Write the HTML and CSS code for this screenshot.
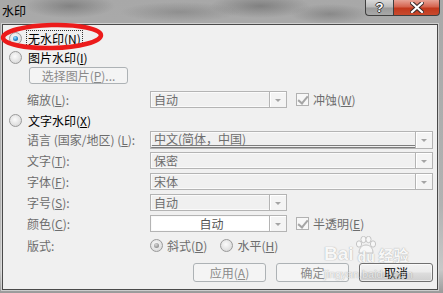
FILE: index.html
```html
<!DOCTYPE html>
<html>
<head>
<meta charset="utf-8">
<link rel="stylesheet" href="styles.css">
</head>
<body>
<div class="window">
  <div class="titlebar">
    <span class="title">水印</span>
    <div class="caption-btns">
      <div class="cbtn help"><span>?</span></div>
      <div class="cbtn close">
        <svg width="14" height="11" viewBox="0 0 14 11"><path d="M2 1 L12 10 M12 1 L2 10" stroke="#3a2a2a" stroke-width="4.2" stroke-linecap="square"/><path d="M2 1 L12 10 M12 1 L2 10" stroke="#fff" stroke-width="2.2" stroke-linecap="square"/></svg>
      </div>
    </div>
  </div>
  <div class="client">
    <div class="row opt r1"><span class="radio on"></span><span class="optlabel focus">无水印(<u>N</u>)</span></div>
    <div class="row opt r2"><span class="radio"></span><span class="optlabel">图片水印(<u>I</u>)</span></div>
    <div class="row r3"><div class="btn dis pick">选择图片(<u>P</u>)...</div></div>
    <div class="row field r4">
      <span class="lbl">缩放(<u>L</u>):</span>
      <div class="combo short"><span class="ctext">自动</span><span class="arrow"></span></div>
      <span class="check"></span><span class="chklbl">冲蚀(<u>W</u>)</span>
    </div>
    <div class="row opt r5"><span class="radio"></span><span class="optlabel">文字水印(<u>X</u>)</span></div>
    <div class="row field r6">
      <span class="lbl">语言 (国家/地区) (<u>L</u>):</span>
      <div class="combo long"><span class="ctext lang">中文(简体，中国)</span><span class="arrow"></span></div>
    </div>
    <div class="row field r7">
      <span class="lbl">文字(<u>T</u>):</span>
      <div class="combo long"><span class="ctext">保密</span><span class="arrow"></span></div>
    </div>
    <div class="row field r8">
      <span class="lbl">字体(<u>F</u>):</span>
      <div class="combo long"><span class="ctext">宋体</span><span class="arrow"></span></div>
    </div>
    <div class="row field r9">
      <span class="lbl">字号(<u>S</u>):</span>
      <div class="combo short"><span class="ctext">自动</span><span class="arrow"></span></div>
    </div>
    <div class="row field r10">
      <span class="lbl">颜色(<u>C</u>):</span>
      <div class="combo short"><span class="ctext white center">自动</span><span class="arrow"></span></div>
      <span class="check"></span><span class="chklbl">半透明(<u>E</u>)</span>
    </div>
    <div class="row field r11">
      <span class="lbl">版式:</span>
      <span class="radio dot"></span><span class="rlbl">斜式(<u>D</u>)</span>
      <span class="radio second"></span><span class="rlbl">水平(<u>H</u>)</span>
    </div>
    <div class="row r12">
      <div class="btn dis">应用(<u>A</u>)</div>
      <div class="btn dis">确定</div>
      <div class="btn active">取消</div>
    </div>
  </div>
  <svg class="mark" width="110" height="32" viewBox="0 0 110 32"><ellipse cx="52" cy="14.5" rx="49" ry="11.5" fill="none" stroke="#ec1b1b" stroke-width="4.5" transform="rotate(-1.5 52 14.5)"/></svg>
  <div class="wm">
    <div class="wm-line">
      <span class="wm-big">Bai</span>
      <span class="wm-du">
        <svg class="paw" width="22" height="20" viewBox="0 0 22 20"><g fill="#fff" stroke="#9a9a9a" stroke-width="1"><ellipse cx="4" cy="8" rx="2.6" ry="3.2"/><ellipse cx="8.5" cy="3.5" rx="2.6" ry="3.2"/><ellipse cx="13.5" cy="3.5" rx="2.6" ry="3.2"/><ellipse cx="18" cy="8" rx="2.6" ry="3.2"/><path d="M4 17 C4 11 8 9 11 9 C14 9 18 11 18 17 Z"/></g></svg>
        <span class="du">du</span>
      </span>
      <span class="wm-cn">经验</span>
    </div>
    <div class="wm-url">jingyan.baidu.com</div>
  </div>
</div>
</body>
</html>
```

FILE: styles.css
```css
* { box-sizing: border-box; margin: 0; padding: 0; }
body {
  width: 443px; height: 293px; overflow: hidden;
  font-family: "Noto Sans CJK SC", "Liberation Sans", sans-serif;
  font-size: 12px; color: #000;
}
u { text-decoration: underline; }
.window {
  position: relative;
  width: 443px; height: 293px;
  display: flex; flex-direction: column;
  background:
    radial-gradient(ellipse 45px 12px at 70px 6px, rgba(85,85,85,.45), transparent),
    radial-gradient(ellipse 60px 10px at 180px 12px, rgba(95,95,95,.35), transparent),
    radial-gradient(ellipse 50px 12px at 260px 6px, rgba(80,80,80,.45), transparent),
    radial-gradient(ellipse 40px 10px at 330px 14px, rgba(90,90,90,.4), transparent),
    linear-gradient(180deg, #a8a8a8 0%, #b2b2b2 70%, #c8c8c8 92%, #9a9a9a 100%);
}
.titlebar {
  height: 24px;
  display: flex; justify-content: space-between; align-items: flex-start;
}
.title { padding: 3px 0 0 2px; line-height: 16px; font-size: 12px; }
.caption-btns { display: flex; margin-right: 3px; }
.cbtn {
  height: 16px; display: flex; align-items: center; justify-content: center;
  border: 1px solid #3f3f3f; border-top: none;
}
.help {
  width: 28px; border-radius: 0 0 0 4px; border-right: none;
  background: linear-gradient(180deg, #d8d8d8 0%, #b9b9b9 48%, #9a9a9a 52%, #a8a8a8 100%);
}
.help span {
  color: #fff; font-family: "Liberation Sans", sans-serif; font-weight: bold; font-size: 13px; line-height: 14px;
  text-shadow: 1px 0 0 #333, -1px 0 0 #333, 0 1px 0 #333, 0 -1px 0 #333;
}
.close {
  width: 47px; border-radius: 0 0 4px 0;
  background: linear-gradient(180deg, #e7a295 0%, #d5644f 45%, #c2381c 55%, #c84a2e 100%);
}
.client {
  flex: 1;
  margin: 0 5px 3px 2px;
  border: 1px solid #4a4a4a;
  box-shadow: 0 0 0 1px rgba(235,235,235,.6);
  background: #f0f0f0;
  display: flex; flex-direction: column;
  padding-right: 4px;
}
.row { display: flex; align-items: center; flex-shrink: 0; }
.opt { height: 18px; padding-left: 6px; }
.field { height: 17px; padding-left: 24px; }
.r1 { margin-top: 4px; }
.r2 { margin-top: 1px; }
.r3 { margin-top: 1px; padding-left: 26px; height: 17px; }
.r4 { margin-top: 7px; }
.r5 { margin-top: 3px; }
.r6 { margin-top: 2px; }
.r7, .r8, .r9, .r10 { margin-top: 4px; }
.r11 { margin-top: 4px; height: 18px; }
.r12 { margin-top: 9px; height: 19px; justify-content: flex-end; gap: 10px; }

.radio {
  width: 13px; height: 13px; border-radius: 50%; flex-shrink: 0;
  border: 1px solid #9a9a9a;
  background: radial-gradient(circle at 45% 40%, #fbfbfb 0%, #e4e4e4 55%, #cfcfcf 100%);
  position: relative;
}
.radio.on::after, .radio.dot::after {
  content: ""; position: absolute; left: 3px; top: 3px; width: 5px; height: 5px; border-radius: 50%;
}
.radio.on::after { background: radial-gradient(circle at 40% 35%, #9ee4ff 0%, #2a8bd0 50%, #0d4f8f 100%); }
.radio.dot::after { background: radial-gradient(circle at 40% 35%, #d8d8d8 0%, #9a9a9a 60%, #7c7c7c 100%); }
.optlabel { margin-left: 4px; line-height: 15px; padding: 0 1px; border: 1px solid transparent; }
.optlabel.focus { border: 1px dotted #333; }

.lbl { width: 123px; color: #6d6d6d; white-space: nowrap; }
.combo {
  height: 17px; display: flex; border: 1px solid #b4b4b4;
  background: #f0f0f0;
}
.combo.short { width: 137px; }
.combo.long { width: 283px; }
.r6 .combo { height: 18px; }
.ctext {
  flex: 1; color: #6d6d6d; line-height: 14px; padding-left: 2px;
  border: 1px solid #fafafa; border-right: none;
}
.ctext.lang { border-bottom: 3px double #7d7d7d; line-height: 12px; }
.ctext.white { background: #fff; color: #555; }
.ctext.center { text-align: center; }
.arrow {
  width: 17px; flex-shrink: 0; border-left: 1px solid #b4b4b4;
  background: #f4f4f4; position: relative;
  box-shadow: inset 1px 1px 0 #fff;
}
.arrow::after {
  content: ""; position: absolute; left: 5px; top: 7px;
  border-left: 3px solid transparent; border-right: 3px solid transparent; border-top: 3px solid #a4a4a4;
}
.check {
  width: 13px; height: 13px; margin-left: 9px; flex-shrink: 0;
  border: 1px solid #b1b1b1; background: #f7f7f7; position: relative;
}
.check::after {
  content: ""; position: absolute; left: 3px; top: 0px; width: 4px; height: 8px;
  border-right: 2px solid #a5a5a5; border-bottom: 2px solid #a5a5a5; transform: rotate(40deg);
}
.chklbl { margin-left: 4px; color: #6d6d6d; }
.rlbl { margin-left: 4px; color: #6d6d6d; }
.radio.second { margin-left: 13px; }

.btn {
  width: 73px; height: 19px; border-radius: 3px;
  display: flex; align-items: center; justify-content: center;
  line-height: 15px;
}
.btn.dis { border: 1px solid #adb2b5; background: #f4f4f4; color: #8a8a8a; }
.btn.pick { width: 99px; height: 17px; }
.btn.active {
  width: 74px; border: 1px solid #707070; color: #000;
  background: linear-gradient(180deg, #f2f2f2 0%, #ebebeb 48%, #dddddd 52%, #cfcfcf 100%);
  box-shadow: inset 0 0 0 1px rgba(255,255,255,.6);
}

.mark { position: absolute; left: 0; top: 22px; }
.wm {
  position: absolute; left: 324px; top: 236px; width: 100px;
  opacity: .5; color: #fff; pointer-events: none; white-space: nowrap;
  text-shadow: 0 0 1px #7a7a7a, 0 0 1px #7a7a7a;
}
.wm-line { display: flex; align-items: flex-end; height: 28px; }
.wm-big { font-family: "Liberation Sans", sans-serif; font-weight: bold; font-size: 19px; line-height: 20px; }
.wm-du { display: flex; flex-direction: column; align-items: center; width: 24px; position: relative; height: 28px; }
.paw { display: block; }
.du {
  position: absolute; left: 4px; bottom: 0;
  font-family: "Liberation Sans", sans-serif; font-weight: bold; font-size: 14px; line-height: 14px;
}
.wm-cn { font-size: 15px; font-weight: bold; line-height: 18px; margin-left: 1px; }
.wm-url { font-family: "Liberation Sans", sans-serif; font-size: 11px; line-height: 12px; margin-top: 4px; color: #f4f4f4; }
```
